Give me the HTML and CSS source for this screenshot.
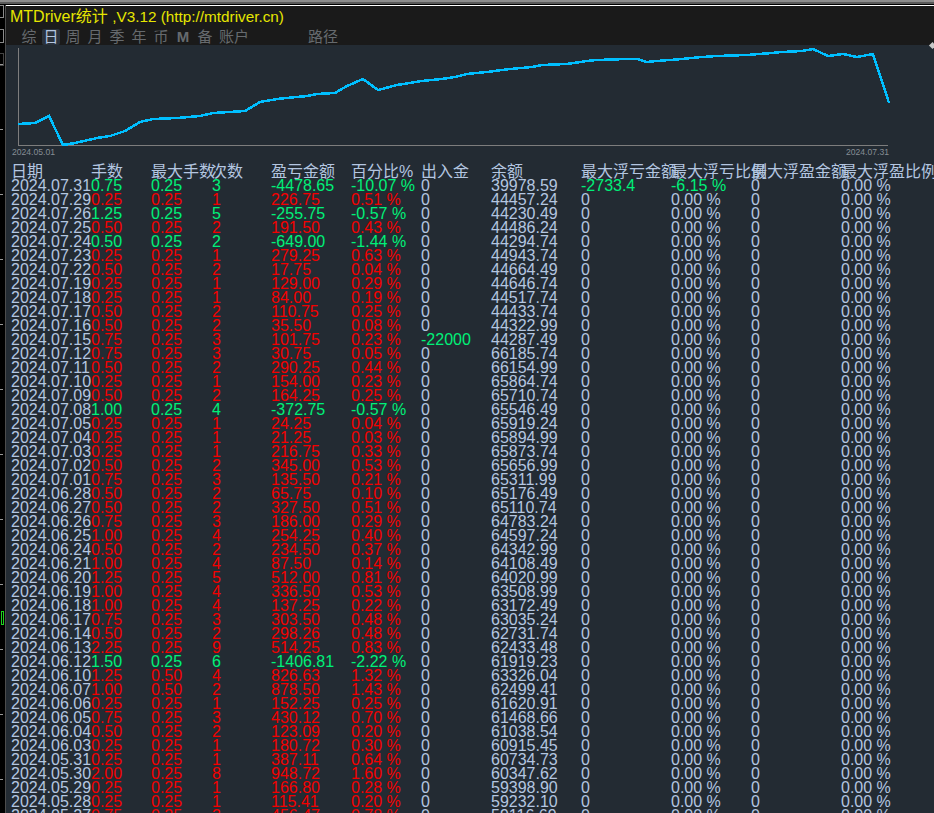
FILE: index.html
```html
<!DOCTYPE html>
<html lang="zh">
<head>
<meta charset="utf-8">
<title>MTDriver统计</title>
<link rel="stylesheet" href="styles.css">
</head>
<body>
<div class="chrome"></div>
<div class="app">
  <aside class="strip">
    <span class="mark mark-a"></span>
    <span class="mark mark-b"></span>
    <span class="mark mark-c"></span>
    <span class="candle"></span>
  </aside>
  <main class="main">
    <header class="head">
      <h1 class="title">MTDriver统计 <span class="ver">,V3.12 (http://mtdriver.cn)</span></h1>
      <nav class="tabs">
        <span class="tab">综</span>
        <span class="tab active">日</span>
        <span class="tab">周</span>
        <span class="tab">月</span>
        <span class="tab">季</span>
        <span class="tab">年</span>
        <span class="tab">币</span>
        <span class="tab latin">M</span>
        <span class="tab">备</span>
        <span class="tab wide">账户</span>
        <span class="tab wide path">路径</span>
      </nav>
    </header>
    <span class="handle"></span>
    <section class="chart">
      <svg class="plot" viewBox="6 45 928 102" width="928" height="102" aria-hidden="true">
        <path class="axis" d="M18.5 48V145.5H888"/>
        <polyline class="curve" points="18,124 35,123 49,116 63,145 75,143 97,138 110,136 125,131 140,122 153,119 177,118 200,116 213,113 245,111 260,102 277,99 307,96 317,94 335,93 347,86 363,79 378,90 397,85 422,81 442,79 455,77 467,74 487,72 510,69 532,67 542,65 567,64 587,61 597,60 627,59 637,59 647,62 657,61 682,59 702,57 717,56 747,55 772,53 782,52 802,51 813,49 828,56 843,54 857,57 873,54 889,103"/>
      </svg>
      <div class="dates"><span>2024.05.01</span><span>2024.07.31</span></div>
    </section>
    <table class="stats">
      <colgroup>
        <col class="c80"><col class="c60"><col class="c60"><col class="c60"><col class="c80"><col class="c70"><col class="c70"><col class="c90"><col class="c90"><col class="c80"><col class="c90"><col class="c93">
      </colgroup>
      <thead>
        <tr><th>日期</th><th>手数</th><th>最大手数</th><th>次数</th><th>盈亏金额</th><th>百分比%</th><th>出入金</th><th>余额</th><th>最大浮亏金额</th><th>最大浮亏比例</th><th>最大浮盈金额</th><th>最大浮盈比例</th></tr>
      </thead>
      <tbody>
        <tr class="loss"><td>2024.07.31</td><td>0.75</td><td>0.25</td><td class="ctr">3</td><td>-4478.65</td><td>-10.07 %</td><td>0</td><td>39978.59</td><td class="neg">-2733.4</td><td class="neg">-6.15 %</td><td>0</td><td>0.00 %</td></tr>
        <tr class="gain"><td>2024.07.29</td><td>0.25</td><td>0.25</td><td class="ctr">1</td><td>226.75</td><td>0.51 %</td><td>0</td><td>44457.24</td><td>0</td><td>0.00 %</td><td>0</td><td>0.00 %</td></tr>
        <tr class="loss"><td>2024.07.26</td><td>1.25</td><td>0.25</td><td class="ctr">5</td><td>-255.75</td><td>-0.57 %</td><td>0</td><td>44230.49</td><td>0</td><td>0.00 %</td><td>0</td><td>0.00 %</td></tr>
        <tr class="gain"><td>2024.07.25</td><td>0.50</td><td>0.25</td><td class="ctr">2</td><td>191.50</td><td>0.43 %</td><td>0</td><td>44486.24</td><td>0</td><td>0.00 %</td><td>0</td><td>0.00 %</td></tr>
        <tr class="loss"><td>2024.07.24</td><td>0.50</td><td>0.25</td><td class="ctr">2</td><td>-649.00</td><td>-1.44 %</td><td>0</td><td>44294.74</td><td>0</td><td>0.00 %</td><td>0</td><td>0.00 %</td></tr>
        <tr class="gain"><td>2024.07.23</td><td>0.25</td><td>0.25</td><td class="ctr">1</td><td>279.25</td><td>0.63 %</td><td>0</td><td>44943.74</td><td>0</td><td>0.00 %</td><td>0</td><td>0.00 %</td></tr>
        <tr class="gain"><td>2024.07.22</td><td>0.50</td><td>0.25</td><td class="ctr">2</td><td>17.75</td><td>0.04 %</td><td>0</td><td>44664.49</td><td>0</td><td>0.00 %</td><td>0</td><td>0.00 %</td></tr>
        <tr class="gain"><td>2024.07.19</td><td>0.25</td><td>0.25</td><td class="ctr">1</td><td>129.00</td><td>0.29 %</td><td>0</td><td>44646.74</td><td>0</td><td>0.00 %</td><td>0</td><td>0.00 %</td></tr>
        <tr class="gain"><td>2024.07.18</td><td>0.25</td><td>0.25</td><td class="ctr">1</td><td>84.00</td><td>0.19 %</td><td>0</td><td>44517.74</td><td>0</td><td>0.00 %</td><td>0</td><td>0.00 %</td></tr>
        <tr class="gain"><td>2024.07.17</td><td>0.50</td><td>0.25</td><td class="ctr">2</td><td>110.75</td><td>0.25 %</td><td>0</td><td>44433.74</td><td>0</td><td>0.00 %</td><td>0</td><td>0.00 %</td></tr>
        <tr class="gain"><td>2024.07.16</td><td>0.50</td><td>0.25</td><td class="ctr">2</td><td>35.50</td><td>0.08 %</td><td>0</td><td>44322.99</td><td>0</td><td>0.00 %</td><td>0</td><td>0.00 %</td></tr>
        <tr class="gain"><td>2024.07.15</td><td>0.75</td><td>0.25</td><td class="ctr">3</td><td>101.75</td><td>0.23 %</td><td class="neg">-22000</td><td>44287.49</td><td>0</td><td>0.00 %</td><td>0</td><td>0.00 %</td></tr>
        <tr class="gain"><td>2024.07.12</td><td>0.75</td><td>0.25</td><td class="ctr">3</td><td>30.75</td><td>0.05 %</td><td>0</td><td>66185.74</td><td>0</td><td>0.00 %</td><td>0</td><td>0.00 %</td></tr>
        <tr class="gain"><td>2024.07.11</td><td>0.50</td><td>0.25</td><td class="ctr">2</td><td>290.25</td><td>0.44 %</td><td>0</td><td>66154.99</td><td>0</td><td>0.00 %</td><td>0</td><td>0.00 %</td></tr>
        <tr class="gain"><td>2024.07.10</td><td>0.25</td><td>0.25</td><td class="ctr">1</td><td>154.00</td><td>0.23 %</td><td>0</td><td>65864.74</td><td>0</td><td>0.00 %</td><td>0</td><td>0.00 %</td></tr>
        <tr class="gain"><td>2024.07.09</td><td>0.50</td><td>0.25</td><td class="ctr">2</td><td>164.25</td><td>0.25 %</td><td>0</td><td>65710.74</td><td>0</td><td>0.00 %</td><td>0</td><td>0.00 %</td></tr>
        <tr class="loss"><td>2024.07.08</td><td>1.00</td><td>0.25</td><td class="ctr">4</td><td>-372.75</td><td>-0.57 %</td><td>0</td><td>65546.49</td><td>0</td><td>0.00 %</td><td>0</td><td>0.00 %</td></tr>
        <tr class="gain"><td>2024.07.05</td><td>0.25</td><td>0.25</td><td class="ctr">1</td><td>24.25</td><td>0.04 %</td><td>0</td><td>65919.24</td><td>0</td><td>0.00 %</td><td>0</td><td>0.00 %</td></tr>
        <tr class="gain"><td>2024.07.04</td><td>0.25</td><td>0.25</td><td class="ctr">1</td><td>21.25</td><td>0.03 %</td><td>0</td><td>65894.99</td><td>0</td><td>0.00 %</td><td>0</td><td>0.00 %</td></tr>
        <tr class="gain"><td>2024.07.03</td><td>0.25</td><td>0.25</td><td class="ctr">1</td><td>216.75</td><td>0.33 %</td><td>0</td><td>65873.74</td><td>0</td><td>0.00 %</td><td>0</td><td>0.00 %</td></tr>
        <tr class="gain"><td>2024.07.02</td><td>0.50</td><td>0.25</td><td class="ctr">2</td><td>345.00</td><td>0.53 %</td><td>0</td><td>65656.99</td><td>0</td><td>0.00 %</td><td>0</td><td>0.00 %</td></tr>
        <tr class="gain"><td>2024.07.01</td><td>0.75</td><td>0.25</td><td class="ctr">3</td><td>135.50</td><td>0.21 %</td><td>0</td><td>65311.99</td><td>0</td><td>0.00 %</td><td>0</td><td>0.00 %</td></tr>
        <tr class="gain"><td>2024.06.28</td><td>0.50</td><td>0.25</td><td class="ctr">2</td><td>65.75</td><td>0.10 %</td><td>0</td><td>65176.49</td><td>0</td><td>0.00 %</td><td>0</td><td>0.00 %</td></tr>
        <tr class="gain"><td>2024.06.27</td><td>0.50</td><td>0.25</td><td class="ctr">2</td><td>327.50</td><td>0.51 %</td><td>0</td><td>65110.74</td><td>0</td><td>0.00 %</td><td>0</td><td>0.00 %</td></tr>
        <tr class="gain"><td>2024.06.26</td><td>0.75</td><td>0.25</td><td class="ctr">3</td><td>186.00</td><td>0.29 %</td><td>0</td><td>64783.24</td><td>0</td><td>0.00 %</td><td>0</td><td>0.00 %</td></tr>
        <tr class="gain"><td>2024.06.25</td><td>1.00</td><td>0.25</td><td class="ctr">4</td><td>254.25</td><td>0.40 %</td><td>0</td><td>64597.24</td><td>0</td><td>0.00 %</td><td>0</td><td>0.00 %</td></tr>
        <tr class="gain"><td>2024.06.24</td><td>0.50</td><td>0.25</td><td class="ctr">2</td><td>234.50</td><td>0.37 %</td><td>0</td><td>64342.99</td><td>0</td><td>0.00 %</td><td>0</td><td>0.00 %</td></tr>
        <tr class="gain"><td>2024.06.21</td><td>1.00</td><td>0.25</td><td class="ctr">4</td><td>87.50</td><td>0.14 %</td><td>0</td><td>64108.49</td><td>0</td><td>0.00 %</td><td>0</td><td>0.00 %</td></tr>
        <tr class="gain"><td>2024.06.20</td><td>1.25</td><td>0.25</td><td class="ctr">5</td><td>512.00</td><td>0.81 %</td><td>0</td><td>64020.99</td><td>0</td><td>0.00 %</td><td>0</td><td>0.00 %</td></tr>
        <tr class="gain"><td>2024.06.19</td><td>1.00</td><td>0.25</td><td class="ctr">4</td><td>336.50</td><td>0.53 %</td><td>0</td><td>63508.99</td><td>0</td><td>0.00 %</td><td>0</td><td>0.00 %</td></tr>
        <tr class="gain"><td>2024.06.18</td><td>1.00</td><td>0.25</td><td class="ctr">4</td><td>137.25</td><td>0.22 %</td><td>0</td><td>63172.49</td><td>0</td><td>0.00 %</td><td>0</td><td>0.00 %</td></tr>
        <tr class="gain"><td>2024.06.17</td><td>0.75</td><td>0.25</td><td class="ctr">3</td><td>303.50</td><td>0.48 %</td><td>0</td><td>63035.24</td><td>0</td><td>0.00 %</td><td>0</td><td>0.00 %</td></tr>
        <tr class="gain"><td>2024.06.14</td><td>0.50</td><td>0.25</td><td class="ctr">2</td><td>298.26</td><td>0.48 %</td><td>0</td><td>62731.74</td><td>0</td><td>0.00 %</td><td>0</td><td>0.00 %</td></tr>
        <tr class="gain"><td>2024.06.13</td><td>2.25</td><td>0.25</td><td class="ctr">9</td><td>514.25</td><td>0.83 %</td><td>0</td><td>62433.48</td><td>0</td><td>0.00 %</td><td>0</td><td>0.00 %</td></tr>
        <tr class="loss"><td>2024.06.12</td><td>1.50</td><td>0.25</td><td class="ctr">6</td><td>-1406.81</td><td>-2.22 %</td><td>0</td><td>61919.23</td><td>0</td><td>0.00 %</td><td>0</td><td>0.00 %</td></tr>
        <tr class="gain"><td>2024.06.10</td><td>1.25</td><td>0.50</td><td class="ctr">4</td><td>826.63</td><td>1.32 %</td><td>0</td><td>63326.04</td><td>0</td><td>0.00 %</td><td>0</td><td>0.00 %</td></tr>
        <tr class="gain"><td>2024.06.07</td><td>1.00</td><td>0.50</td><td class="ctr">2</td><td>878.50</td><td>1.43 %</td><td>0</td><td>62499.41</td><td>0</td><td>0.00 %</td><td>0</td><td>0.00 %</td></tr>
        <tr class="gain"><td>2024.06.06</td><td>0.25</td><td>0.25</td><td class="ctr">1</td><td>152.25</td><td>0.25 %</td><td>0</td><td>61620.91</td><td>0</td><td>0.00 %</td><td>0</td><td>0.00 %</td></tr>
        <tr class="gain"><td>2024.06.05</td><td>0.75</td><td>0.25</td><td class="ctr">3</td><td>430.12</td><td>0.70 %</td><td>0</td><td>61468.66</td><td>0</td><td>0.00 %</td><td>0</td><td>0.00 %</td></tr>
        <tr class="gain"><td>2024.06.04</td><td>0.50</td><td>0.25</td><td class="ctr">2</td><td>123.09</td><td>0.20 %</td><td>0</td><td>61038.54</td><td>0</td><td>0.00 %</td><td>0</td><td>0.00 %</td></tr>
        <tr class="gain"><td>2024.06.03</td><td>0.25</td><td>0.25</td><td class="ctr">1</td><td>180.72</td><td>0.30 %</td><td>0</td><td>60915.45</td><td>0</td><td>0.00 %</td><td>0</td><td>0.00 %</td></tr>
        <tr class="gain"><td>2024.05.31</td><td>0.25</td><td>0.25</td><td class="ctr">1</td><td>387.11</td><td>0.64 %</td><td>0</td><td>60734.73</td><td>0</td><td>0.00 %</td><td>0</td><td>0.00 %</td></tr>
        <tr class="gain"><td>2024.05.30</td><td>2.00</td><td>0.25</td><td class="ctr">8</td><td>948.72</td><td>1.60 %</td><td>0</td><td>60347.62</td><td>0</td><td>0.00 %</td><td>0</td><td>0.00 %</td></tr>
        <tr class="gain"><td>2024.05.29</td><td>0.25</td><td>0.25</td><td class="ctr">1</td><td>166.80</td><td>0.28 %</td><td>0</td><td>59398.90</td><td>0</td><td>0.00 %</td><td>0</td><td>0.00 %</td></tr>
        <tr class="gain"><td>2024.05.28</td><td>0.25</td><td>0.25</td><td class="ctr">1</td><td>115.41</td><td>0.20 %</td><td>0</td><td>59232.10</td><td>0</td><td>0.00 %</td><td>0</td><td>0.00 %</td></tr>
        <tr class="gain"><td>2024.05.27</td><td>0.75</td><td>0.25</td><td class="ctr">3</td><td>456.47</td><td>0.78 %</td><td>0</td><td>59116.69</td><td>0</td><td>0.00 %</td><td>0</td><td>0.00 %</td></tr>
      </tbody>
    </table>
  </main>
</div>
</body>
</html>
```

FILE: styles.css
```css
* { box-sizing: border-box; }

html, body {
  margin: 0;
  height: 100%;
  overflow: hidden;
  background: #000;
}

body {
  display: flex;
  flex-direction: column;
  font-family: "Liberation Sans", "Noto Sans CJK SC", sans-serif;
}

.chrome {
  flex: none;
  height: 5px;
  background: #000;
  background-image: linear-gradient(#8c8c8c 0 2px, #5a5a5a 2px 4px, #000 4px);
}

.app {
  flex: 1;
  display: flex;
  min-height: 0;
}

.strip {
  flex: none;
  position: relative;
  width: 6px;
  background-color: #000;
  background-image: linear-gradient(#9a9a9a 1px, transparent 1px);
  background-size: 3px 65px;
  background-repeat: repeat-y;
  background-position: 0 59px;
  border-right: 1px solid #4c4c4c;
}

.mark {
  position: absolute;
  left: 0;
  width: 4px;
  border: 1px solid #8a8a8a;
  border-left: 0;
}
.mark-a { top: 0; height: 13px; }
.mark-b { top: 24px; height: 14px; }
.mark-c { top: 48px; height: 13px; border-color: #444; }

.candle {
  position: absolute;
  left: 1px;
  top: 606px;
  width: 3px;
  height: 14px;
  border: 1px solid #1fd41f;
}

.main {
  position: relative;
  flex: 1;
  min-width: 0;
  overflow: hidden;
  background: #232b33;
}

.head {
  height: 40px;
  background: #1a1a1a;
  border-top: 1px solid #fff;
  padding: 0 0 0 4px;
}

.title {
  margin: 0;
  height: 22px;
  font-size: 16px;
  line-height: 22px;
  font-weight: 400;
  color: #e6e600;
  white-space: nowrap;
}

.ver {
  font-size: 15.3px;
}

.tabs {
  display: flex;
  align-items: center;
  height: 17px;
  padding-left: 8px;
  color: #666a6e;
  font-size: 15px;
  line-height: 16px;
}

.tab {
  flex: none;
  width: 22px;
  height: 16px;
  text-align: center;
}
.tab.active {
  width: 18px;
  margin: 0 2px;
  color: #b4c6e0;
  background: #2a323c;
  border-radius: 2px;
}
.tab.latin { font-weight: 700; }
.tab.wide { width: 36px; }
.tab.path { margin-left: 53px; }

.handle {
  position: absolute;
  right: -1px;
  top: 38px;
  width: 5px;
  height: 5px;
  background: #c8c8c8;
  transform: rotate(45deg);
}

.chart {
  height: 120px;
}

.plot {
  display: block;
}

.axis {
  fill: none;
  stroke: #7d7d7d;
  stroke-width: 1;
  shape-rendering: crispEdges;
}

.curve {
  fill: none;
  stroke: #00bfff;
  stroke-width: 2.5;
  shape-rendering: crispEdges;
}

.dates {
  display: flex;
  justify-content: space-between;
  width: 883px;
  padding-left: 6px;
  font-size: 8.6px;
  line-height: 10px;
  color: #858d95;
}

.stats {
  margin-left: 5px;
  width: 923px;
  table-layout: fixed;
  border-collapse: collapse;
  font-size: 16px;
  line-height: 14px;
  color: #b4c6e0;
  white-space: nowrap;
}

.c60 { width: 60px; }
.c70 { width: 70px; }
.c80 { width: 80px; }
.c90 { width: 90px; }
.c93 { width: 93px; }

.stats th,
.stats td {
  height: 14px;
  padding: 0;
  text-align: left;
  font-weight: 400;
  overflow: visible;
}

.stats .ctr { padding-left: 1px; }

.gain td:nth-child(n+2):nth-child(-n+6) { color: #f40000; }
.loss td:nth-child(n+2):nth-child(-n+6) { color: #00f078; }
.stats .neg { color: #00f078; }
```
